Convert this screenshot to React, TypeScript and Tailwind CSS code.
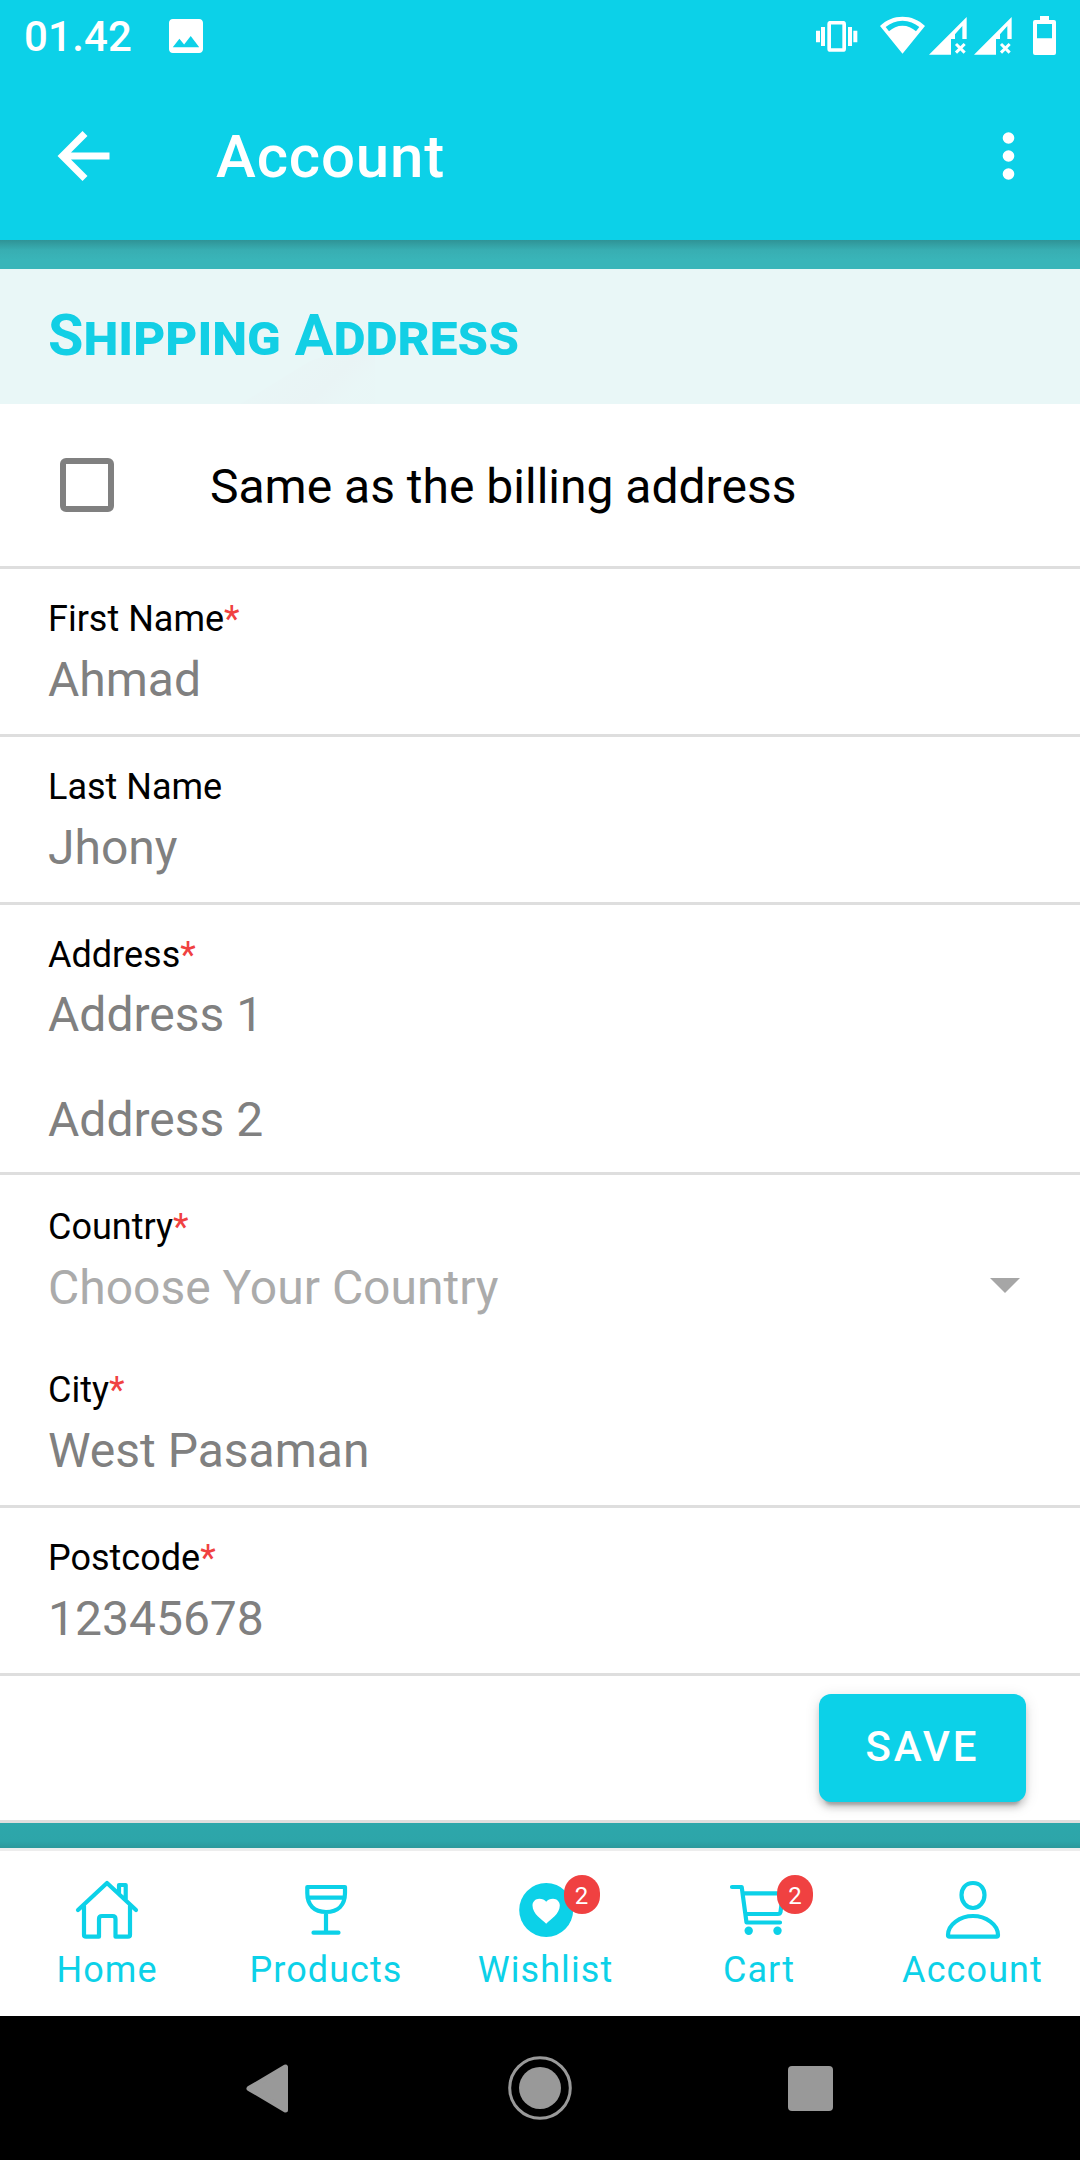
import React from "react";

const stroke = {
  fill: "none",
  stroke: "#0cd1e8",
  strokeWidth: 4.2,
  strokeLinecap: "round" as const,
  strokeLinejoin: "round" as const,
};

function Signal() {
  return (
    <svg className="block h-[38px] w-[38px]" viewBox="0 0 114 114" fill="#fff">
      <path d="M0 113 113 0V66H100V27L78 52V66H66V113Z" />
      <path d="M81 81 107 107M107 81 81 107" stroke="#fff" strokeWidth="9" />
    </svg>
  );
}

function StatusBar() {
  return (
    <div className="flex h-[72px] items-start pl-6 pr-6 text-white">
      <span className="mt-[12px] w-[145px] text-[42px] font-medium leading-[50px] tracking-[0.2px]">01.42</span>
      <svg className="mt-[19px] h-[34px] w-[34px]" viewBox="3 3 18 18" fill="#fff">
        <path d="M21 19V5c0-1.1-.9-2-2-2H5c-1.1 0-2 .9-2 2v14c0 1.1.9 2 2 2h14c1.1 0 2-.9 2-2zM8.500 13.500l2.500 3.010L14.500 12l4.500 6H5l3.500-4.500z" />
      </svg>
      <svg className="ml-auto mt-[21px] h-[31px] w-[42px]" viewBox="0 0 126 93" fill="#fff">
        <path d="M0 29H12V64H0ZM15 18H27V75H15ZM96 18H108V75H96ZM112 29H124V64H112Z" />
        <rect x="39.500" y="5" width="45" height="82" rx="4" fill="none" stroke="#fff" strokeWidth="11" />
      </svg>
      <svg className="ml-[22px] mt-[16px] h-[38px] w-[45px]" viewBox="0 0 135 114">
        <path
          fill="#fff"
          fillRule="evenodd"
          d="M67.500 113 0 30C18 12 42 2 67.500 2S117 12 135 30ZM17 33 27 46C39 35 52 29 67.500 29S96 35 108 46L118 33C104 21 87 14 67.500 14S31 21 17 33Z"
        />
      </svg>
      <div className="ml-1 mt-[17px] flex gap-[7px]">
        <Signal />
        <Signal />
      </div>
      <svg className="ml-[21px] mt-[16px] h-[39px] w-[23px]" viewBox="0 0 69 117" fill="#fff">
        <path fillRule="evenodd" d="M21 0H48V12H63Q69 12 69 18V111Q69 117 63 117H6Q0 117 0 111V18Q0 12 6 12H21ZM12 24V67H57V24Z" />
      </svg>
    </div>
  );
}

function AppBar() {
  return (
    <div className="flex h-[168px] items-center pl-[57px] text-white">
      <svg className="h-[52px] w-[53px]" viewBox="0 0 53 52" fill="none" stroke="#fff" strokeWidth="7">
        <path d="M52.500 26H6M28 3.500 5.500 26 28 48.500" />
      </svg>
      <h1 className="ml-[106px] pt-px text-[60px] font-medium leading-[72px] tracking-[0.85px]">Account</h1>
      <svg className="ml-auto mr-[65px] h-[50px] w-[13px]" viewBox="0 0 13 50" fill="#fff">
        <circle cx="6.500" cy="7" r="5.800" />
        <circle cx="6.500" cy="25" r="5.800" />
        <circle cx="6.500" cy="43" r="5.800" />
      </svg>
    </div>
  );
}

function Label({ text, required = true }: { text: string; required?: boolean }) {
  return (
    <div className="text-[36px] leading-[48px] text-black">
      {text}
      {required && <span className="text-[#f04141]">*</span>}
    </div>
  );
}

function Field({ label, value, required }: { label: string; value: string; required?: boolean }) {
  return (
    <div className="h-[168px] border-b-[3px] border-[#dedede] pl-12 pt-[26px]">
      <Label text={label} required={required} />
      <div className="mt-[7px] text-[48px] leading-[60px] text-[#808080]">{value}</div>
    </div>
  );
}

function Badge() {
  return (
    <span className="absolute left-[54px] top-0 flex h-[39px] w-[36px] items-center justify-center rounded-[18px] bg-[#f04141] pt-[2px] text-[24px] leading-none text-white">
      2
    </span>
  );
}

const tabs = [
  {
    label: "Home",
    width: "w-[214px]",
    icon: (
      <g {...stroke}>
        <path d="M7 35 36 8 65 35M13 31V60Q13 61.700 15 61.700H28V44Q28 41 31 41H41.500Q44.500 41 44.500 44V61.700H57Q59 61.700 59 60V31M48 18V10H54.700V25" />
      </g>
    ),
  },
  {
    label: "Products",
    width: "w-[224px]",
    icon: (
      <g {...stroke}>
        <path d="M17.300 12H55V18C55 30 48 37 36 37S17.300 30 17.300 18ZM18 22.700H54M36 37V57.500M23.500 57.700H48.500" />
      </g>
    ),
  },
  {
    label: "Wishlist",
    width: "w-[215px]",
    badge: true,
    icon: (
      <g>
        <circle cx="36.200" cy="35" r="27" fill="#0cd1e8" />
        <path fill="#fff" d="M36.200 48.700C32 44.500 22.500 39 22.500 30.500C22.500 26.500 25.500 23.700 29.300 23.700C32.200 23.700 34.800 24.500 36.200 26.800C37.600 24.500 40.200 23.700 43 23.700C46.800 23.700 49.800 26.500 49.800 30.500C49.800 39 40.400 44.500 36.200 48.700Z" />
      </g>
    ),
  },
  {
    label: "Cart",
    width: "w-[212px]",
    badge: true,
    icon: (
      <g {...stroke}>
        <path d="M9 12H18.700L23.500 47.500H57M19.700 18.300H60L57.500 37Q57 39 55 39H22.700" />
        <circle cx="25.700" cy="55.700" r="4.200" fill="#0cd1e8" stroke="none" />
        <circle cx="54.500" cy="55.700" r="4.200" fill="#0cd1e8" stroke="none" />
      </g>
    ),
  },
  {
    label: "Account",
    width: "w-[215px]",
    icon: (
      <g {...stroke}>
        <path d="M36 8C43.500 8 47.500 13.500 47.500 20C47.500 27 42.500 33 36 33S24.500 27 24.500 20C24.500 13.500 28.500 8 36 8ZM36 41C49 41 61 49.500 61 60Q61 61.700 59.500 61.700H12.500Q11 61.700 11 60C11 49.500 23 41 36 41Z" />
      </g>
    ),
  },
];

export default function App() {
  return (
    <div className="flex h-[2160px] w-[1080px] flex-col overflow-hidden bg-white font-[Roboto,sans-serif]">
      <header className="h-[240px] bg-[#0cd1e8]">
        <StatusBar />
        <AppBar />
      </header>
      <div className="h-[29px] bg-[linear-gradient(to_bottom,#2f9396_0px,#38aeb2_10px,#39b5b9_20px)]" />

      <section className="relative h-[135px] bg-[#e9f7f7] pl-12">
        <svg className="absolute left-[230px] top-[70px] h-[65px] w-[150px]" viewBox="0 0 150 65">
          <defs>
            <linearGradient id="shade" x1="0" y1="0" x2="1" y2="0.5">
              <stop offset="0.2" stopColor="#e9f4f5" stopOpacity="0" />
              <stop offset="0.8" stopColor="#e9f4f5" />
              <stop offset="1" stopColor="#e9f4f5" stopOpacity="0.2" />
            </linearGradient>
          </defs>
          <path d="M10 65 80 22 145 0V65Z" fill="url(#shade)" />
        </svg>
        <h2 className="relative pt-8 text-[57.6px] font-bold leading-[70px] text-[#12cfe5] [font-variant:small-caps]">Shipping Address</h2>
      </section>

      <div className="flex h-[165px] items-center border-b-[3px] border-[#dedede] pl-[60px]">
        <span className="h-[54px] w-[54px] rounded-[6px] border-[6px] border-[#808080]" />
        <span className="ml-24 pt-[4px] text-[48px] leading-[60px] text-black">Same as the billing address</span>
      </div>

      <Field label="First Name" value="Ahmad" />
      <Field label="Last Name" value="Jhony" required={false} />

      <div className="h-[270px] border-b-[3px] border-[#dedede] pl-12 pt-[26px]">
        <Label text="Address" />
        <div className="mt-[6px] text-[48px] leading-[60px] text-[#808080]">Address 1</div>
        <div className="mt-[45px] text-[48px] leading-[60px] text-[#808080]">Address 2</div>
      </div>

      <div className="h-[165px] pl-12 pt-[28px]">
        <Label text="Country" />
        <div className="mt-[7px] flex items-center justify-between pr-[60px] text-[48px] leading-[60px] text-[#ababab]">
          Choose Your Country
          <svg className="mb-[6px] h-[15px] w-[30px]" viewBox="0 0 30 15" fill="#a6a6a6">
            <path d="M0 0H30L15 15Z" />
          </svg>
        </div>
      </div>

      <Field label="City" value="West Pasaman" />
      <Field label="Postcode" value="12345678" />

      <div className="flex h-[147px] justify-end border-b-[3px] border-[#dedede] pr-[54px] pt-[18px]">
        <button className="h-[108px] w-[207px] rounded-[12px] bg-[#0cd1e8] pb-[3px] text-[42px] font-medium tracking-[2.9px] text-white shadow-[0_9px_3px_-6px_rgba(0,0,0,0.2),0_6px_6px_0_rgba(0,0,0,0.14),0_3px_15px_0_rgba(0,0,0,0.12)]">
          SAVE
        </button>
      </div>
      <div className="h-[25px] bg-[linear-gradient(to_bottom,#2da7ab_0px,#2da5a9_18px,#2c989b_25px)]" />

      <nav className="flex h-[168px] border-t-[3px] border-[#ededed] bg-white">
        {tabs.map((t) => (
          <div key={t.label} className={`flex flex-col items-center pt-6 ${t.width}`}>
            <div className="relative h-[72px] w-[72px]">
              <svg className="block h-[72px] w-[72px]" viewBox="0 0 72 72">
                {t.icon}
              </svg>
              {t.badge && <Badge />}
            </div>
            <span className="-mt-[1px] whitespace-nowrap text-[36px] leading-[48px] tracking-[1.08px] text-[#0cd1e8]">{t.label}</span>
          </div>
        ))}
      </nav>

      <div className="flex h-[144px] items-center bg-black pl-[246px]">
        <svg className="h-[49px] w-[43px]" viewBox="0 0 43 49">
          <path d="M3 24.500 39.500 3V46Z" fill="#999" stroke="#999" strokeWidth="5" strokeLinejoin="round" />
        </svg>
        <svg className="ml-[218.5px] h-[64px] w-[64px]" viewBox="0 0 64 64">
          <circle cx="32" cy="32" r="30.300" fill="none" stroke="#999" strokeWidth="3" />
          <circle cx="32" cy="32" r="21" fill="#999" />
        </svg>
        <span className="ml-[216px] h-[45px] w-[45px] rounded-[4px] bg-[#999]" />
      </div>
    </div>
  );
}
